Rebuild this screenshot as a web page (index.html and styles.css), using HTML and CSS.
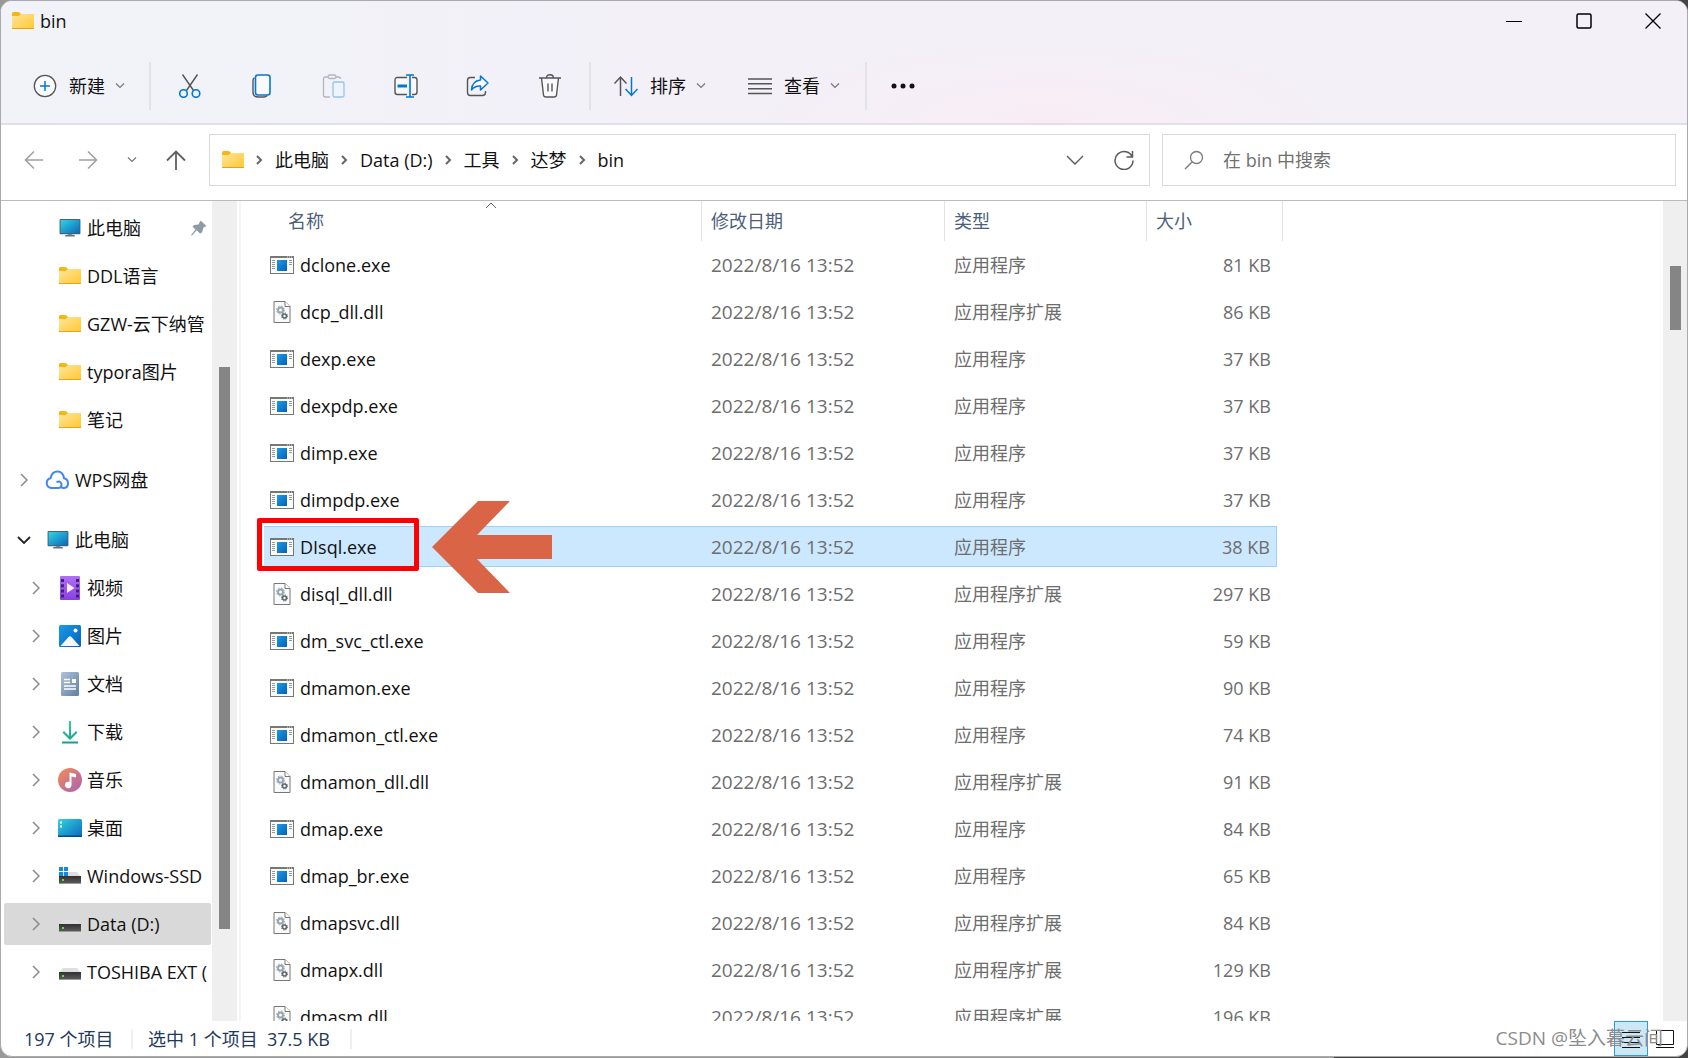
FILE: index.html
```html
<!DOCTYPE html>
<html lang="zh-CN">
<head>
<meta charset="utf-8">
<title>bin</title>
<link rel="stylesheet" href="styles.css">
</head>
<body>
<svg class="defs" aria-hidden="true">
  <defs>
    <linearGradient id="gFolder" x1="0" y1="0" x2="1" y2="1"><stop offset="0" stop-color="#ffe69c"/><stop offset="1" stop-color="#ffc830"/></linearGradient>
    <linearGradient id="gScreen" x1="0" y1="0" x2="1" y2="1"><stop offset="0" stop-color="#34d3e2"/><stop offset="1" stop-color="#0a68bc"/></linearGradient>
    <linearGradient id="gBlue" x1="0" y1="0" x2="1" y2="1"><stop offset="0" stop-color="#1a9be8"/><stop offset="1" stop-color="#0561b8"/></linearGradient>
    <linearGradient id="gVideo" x1="0" y1="0" x2="0" y2="1"><stop offset="0" stop-color="#b070f5"/><stop offset="1" stop-color="#8a3fe0"/></linearGradient>
    <linearGradient id="gDoc" x1="0" y1="0" x2="1" y2="1"><stop offset="0" stop-color="#b0c4d8"/><stop offset="1" stop-color="#5f7fa5"/></linearGradient>
    <linearGradient id="gDown" x1="0" y1="0" x2="0" y2="1"><stop offset="0" stop-color="#35cf92"/><stop offset="1" stop-color="#109f94"/></linearGradient>
    <linearGradient id="gMusic" x1="0" y1="0" x2="1" y2="1"><stop offset="0" stop-color="#f58f50"/><stop offset="1" stop-color="#a85fb8"/></linearGradient>
    <linearGradient id="gDrive" x1="0" y1="0" x2="0" y2="1"><stop offset="0" stop-color="#303030"/><stop offset="1" stop-color="#5a5a5a"/></linearGradient>
  </defs>
  <symbol id="folder" viewBox="0 0 22 18"><path d="M0 1.5Q0 0 1.5 0H6q1 0 1.600 .6L9 2H22V4H0z" fill="#f9b516"/><path d="M0 5Q0 4 1 4H6.500L9 2H21.500Q22 2 22 2.500V17H0z" fill="url(#gFolder)"/><path d="M0 16h22v1H0z" fill="#e5a020"/></symbol>
  <symbol id="pc" viewBox="0 0 22 19"><path d="M9 15h4l1 3H8z" fill="#8d969c"/><path d="M6 17h10v1.500H6z" fill="#66727a"/><rect width="22" height="16" rx="1" fill="#44606e"/><rect x="1" y="1" width="20" height="14" fill="url(#gScreen)"/></symbol>
  <symbol id="chev" viewBox="0 0 8 14"><path d="M1 1l6 6-6 6" fill="none" stroke="currentColor" stroke-width="1.500"/></symbol>
  <symbol id="crumb" viewBox="0 0 7 10"><path d="M1 1l4 4-4 4" fill="none" stroke="#666" stroke-width="2"/></symbol>
  <symbol id="down" viewBox="0 0 10 6"><path d="M1 .5l4 4 4-4" fill="none" stroke="currentColor" stroke-width="1.200"/></symbol>
  <symbol id="drive" viewBox="0 0 22 18"><path d="M4 5h14l4 5H0z" fill="#dcdee1"/><rect y="9" width="22" height="7" fill="url(#gDrive)"/><path d="M0 16h22v1H0z" fill="#9a9a9a"/><rect x="3" y="12" width="2" height="2" fill="#4bea2c"/></symbol>
  <symbol id="exe" viewBox="0 0 24 18"><rect x=".5" y=".5" width="23" height="17" fill="#fbfbfb" stroke="#777871"/><path d="M0 0h24v2H0z" fill="#777871"/><path d="M17 1h1m1 0h1m1 0h1" stroke="#ddd"/><path d="M2 4.500h3m-3 2h3m-3 2h3m-3 2h3m-3 2h3M19 4.500h3m-3 2h3m-3 2h3" stroke="#999"/><rect x="7" y="4" width="10" height="11" fill="url(#gBlue)"/></symbol>
  <symbol id="dll" viewBox="0 0 17 22"><path d="M.5.5h11l5 5v16H.5z" fill="#fafafa" stroke="#777"/><path d="M11.500.5v5h5" fill="#fff" stroke="#777"/><circle cx="7" cy="9" r="2.500" fill="none" stroke="#98a6b0" stroke-width="2"/><circle cx="7" cy="9" r="4" fill="none" stroke="#98a6b0" stroke-dasharray="1.600 1.540"/><circle cx="11" cy="15" r="2" fill="none" stroke="#5c6870" stroke-width="1.600"/><circle cx="11" cy="15" r="3" fill="none" stroke="#5c6870" stroke-dasharray="1.200 1.156"/></symbol>
</svg>

<div class="window">
  <header class="chrome">
    <div class="titlebar">
      <svg class="i-folder"><use href="#folder"/></svg>
      <span class="title">bin</span>
      <div class="caption">
        <button aria-label="最小化"><svg width="16" height="16"><path d="M0 8.500h16" stroke="#000"/></svg></button>
        <button aria-label="最大化"><svg width="16" height="16"><rect x="1" y="1" width="14" height="14" rx="1.500" fill="none" stroke="#000" stroke-width="1.500"/></svg></button>
        <button aria-label="关闭"><svg width="16" height="16"><path d="M.5.5l15 15m0-15l-15 15" stroke="#000" stroke-width="1.300"/></svg></button>
      </div>
    </div>
    <div class="toolbar">
      <button class="tool new"><svg width="24" height="24"><circle cx="12" cy="12" r="10.700" fill="#fafafc" stroke="#555" stroke-width="1.300"/><path d="M7 12h10M12 7v10" stroke="#0078d4" stroke-width="1.500"/></svg>新建<svg class="i-down"><use href="#down"/></svg></button>
      <span class="sep"></span>
      <div class="icons">
        <button aria-label="剪切"><svg width="24" height="24" fill="none" stroke-width="1.400"><path d="M4.500.5l11 16M19.500.5l-11 16" stroke="#555"/><circle cx="5.500" cy="19.500" r="3.800" stroke="#0078d4" stroke-width="1.600"/><circle cx="18" cy="19.500" r="3.800" stroke="#0078d4" stroke-width="1.600"/></svg></button>
        <button aria-label="复制"><svg width="24" height="24" fill="none" stroke-width="1.400"><path d="M4.500 4Q3 4.500 3 7v11q0 5 5 5h6q2 0 3-1.500" stroke="#555"/><rect x="5.500" y="1" width="14.500" height="20" rx="2.500" fill="#fbfbfd" stroke="#0078d4" stroke-width="1.600"/></svg></button>
        <button aria-label="粘贴"><svg width="24" height="24" fill="none" stroke-width="1.300"><path d="M6 3H3.500Q1.500 3 1.500 5v16q0 2 2 2H8M14 3h2.500q2 0 2 2" stroke="#b5b6bb"/><rect x="6" y="1" width="8" height="3.500" rx="1.700" stroke="#b5b6bb"/><rect x="11" y="8" width="11" height="15" rx="1.500" fill="#eef4fb" stroke="#93c3ea"/></svg></button>
        <button aria-label="重命名"><svg width="24" height="24" fill="none" stroke-width="1.400"><path d="M13 3.500H3.500Q1 3.500 1 6v12q0 2.500 2.500 2.500H13M18 3.500h2.500Q23 3.500 23 6v12q0 2.500-2.500 2.500H18" fill="#fafafc" stroke="#555"/><path d="M3.500 12H13" stroke="#0078d4" stroke-width="3"/><path d="M16 1v22M12 1h8M12 23h8" stroke="#0078d4" stroke-width="1.600"/></svg></button>
        <button aria-label="共享"><svg width="24" height="24" fill="none" stroke-width="1.400"><path d="M9 3.500H4.500Q1.500 3.500 1.500 6.500v12q0 3 3 3h12q3 0 3-3V17" stroke="#555"/><path d="M14.500 2L22 9l-7.500 7v-4Q9 11.500 5.500 16 6 7 14.500 6z" fill="#fafafc" stroke="#0078d4" stroke-width="1.500" stroke-linejoin="round"/></svg></button>
        <button aria-label="删除"><svg width="24" height="24" fill="none" stroke="#555" stroke-width="1.400"><path d="M3.500 4L5.500 21q.3 2 2.500 2h8q2.200 0 2.500-2l2-17" fill="#fafafc"/><path d="M1 4h22M8.500 4q0-3.300 3.500-3.300T15.500 4M10 9.500v8M14 9.500v8"/></svg></button>
      </div>
      <span class="sep"></span>
      <button class="tool"><svg width="24" height="24" fill="none" stroke-width="1.500"><path d="M6.500 22V3M.5 9.500l6-6.500 6 6.500" stroke="#555"/><path d="M17.500 3v18M11.500 15l6 6.500 6-6.500" stroke="#0078d4"/></svg>排序<svg class="i-down"><use href="#down"/></svg></button>
      <button class="tool view"><svg width="24" height="24"><path d="M0 5h24M0 9.800h24M0 14.700h24M0 19.500h24" stroke="#555" stroke-width="1.400"/></svg>查看<svg class="i-down"><use href="#down"/></svg></button>
      <span class="sep"></span>
      <button class="more" aria-label="查看更多"><svg width="24" height="6" fill="#111"><circle cx="3" cy="3" r="2.500"/><circle cx="12" cy="3" r="2.500"/><circle cx="21" cy="3" r="2.500"/></svg></button>
    </div>
  </header>

  <div class="navbar">
    <div class="history">
      <button aria-label="后退"><svg width="20" height="20" fill="none" stroke="#a0a0a0" stroke-width="1.600"><path d="M19 10H2M10 1.500L1.500 10l8.500 8.500"/></svg></button>
      <button aria-label="前进"><svg width="20" height="20" fill="none" stroke="#a0a0a0" stroke-width="1.600"><path d="M1 10h17M10 1.500l8.500 8.500-8.500 8.500"/></svg></button>
      <button aria-label="最近浏览的位置" class="recent"><svg class="i-down"><use href="#down"/></svg></button>
      <button aria-label="向上"><svg width="20" height="20" fill="none" stroke="#5f5f5f" stroke-width="1.800"><path d="M10 20V2M1 10.500l9-9 9 9"/></svg></button>
    </div>
    <div class="address">
      <svg class="i-folder"><use href="#folder"/></svg>
      <svg class="i-crumb"><use href="#crumb"/></svg><a href="#">此电脑</a>
      <svg class="i-crumb"><use href="#crumb"/></svg><a href="#">Data (D:)</a>
      <svg class="i-crumb"><use href="#crumb"/></svg><a href="#">工具</a>
      <svg class="i-crumb"><use href="#crumb"/></svg><a href="#">达梦</a>
      <svg class="i-crumb"><use href="#crumb"/></svg><a href="#">bin</a>
      <div class="address-end">
        <button aria-label="以前的位置"><svg width="18" height="10"><path d="M1 1l8 8 8-8" fill="none" stroke="#5a5a5a" stroke-width="1.400"/></svg></button>
        <button aria-label="刷新"><svg width="20" height="20" fill="none" stroke="#5a5a5a" stroke-width="1.500"><path d="M18.500 7.500A9 9 0 1 0 19 10.500M18.500 1v6h-6"/></svg></button>
      </div>
    </div>
    <label class="search">
      <svg width="20" height="20" fill="none" stroke="#7a7a7a" stroke-width="1.300"><circle cx="12.500" cy="7.500" r="6"/><path d="M8.200 11.800L1 19"/></svg>
      <input type="search" placeholder="在 bin 中搜索" aria-label="搜索">
    </label>
  </div>

  <main class="body">
    <nav class="tree" aria-label="导航窗格">
      <ul>
        <li><a href="#" class="node sub"><svg class="i-node"><use href="#pc"/></svg>此电脑<svg class="pin" width="16" height="16"><path d="M9.500 0.500L15.500 6l-2 1-1 .5-1.500 5-2 1-3.300-3.200L1 15.500 0 15l4.500-5.500L1.500 6.500l1.500-1.500 4.500-.5z" fill="#8f9aa3"/></svg></a></li>
        <li><a href="#" class="node sub"><svg class="i-node"><use href="#folder"/></svg>DDL语言</a></li>
        <li><a href="#" class="node sub"><svg class="i-node"><use href="#folder"/></svg>GZW-云下纳管</a></li>
        <li><a href="#" class="node sub"><svg class="i-node"><use href="#folder"/></svg>typora图片</a></li>
        <li><a href="#" class="node sub"><svg class="i-node"><use href="#folder"/></svg>笔记</a></li>
      </ul>
      <ul>
        <li><a href="#" class="node"><svg class="i-chev"><use href="#chev"/></svg><svg class="i-node cloud" viewBox="0 0 24 20" fill="none" stroke="#3f86f5" stroke-width="2"><path d="M14 18H6A5 5 0 0 1 5.500 8.200Q7 1.500 12.500 1.500T19 8.200q4 1 4 5 0 4.800-4.500 4.800-2.500 0-2.500-2.500M11.500 12.200q4-2 5 2 .5 3.800-3.500 3.800"/></svg>WPS网盘</a></li>
      </ul>
      <ul>
        <li><a href="#" class="node"><svg class="i-open" width="14" height="8"><path d="M1 1l6 6 6-6" fill="none" stroke="#222" stroke-width="1.800"/></svg><svg class="i-node"><use href="#pc"/></svg>此电脑</a></li>
        <li><a href="#" class="node sub"><svg class="i-chev"><use href="#chev"/></svg><svg class="i-node tall" viewBox="0 0 22 24"><rect x="1" width="20" height="24" rx="1" fill="url(#gVideo)"/><path d="M3.500 3v20M18.500 3v20" stroke="#432078" stroke-width="3" stroke-dasharray="3 2.200"/><path d="M8 7l7.500 5L8 17z" fill="#f5eefe"/></svg>视频</a></li>
        <li><a href="#" class="node sub"><svg class="i-chev"><use href="#chev"/></svg><svg class="i-node tall" viewBox="0 0 22 22"><rect width="22" height="22" rx="1.500" fill="url(#gBlue)"/><path d="M1.500 21l8-9q1.500-1.500 3 0l8 9z" fill="#f2f8fd"/><circle cx="16.500" cy="5.500" r="2" fill="#fff"/></svg>图片</a></li>
        <li><a href="#" class="node sub"><svg class="i-chev"><use href="#chev"/></svg><svg class="i-node tall" viewBox="0 0 22 24"><rect x="2" width="18" height="24" rx="1.500" fill="url(#gDoc)"/><path d="M5 7.500h6M5 10.500h6M5 14h12M5 17h12" stroke="#fff" stroke-width="1.300"/><path d="M13 7h4v4h-4z" fill="#fff"/></svg>文档</a></li>
        <li><a href="#" class="node sub"><svg class="i-chev"><use href="#chev"/></svg><svg class="i-node tall" viewBox="0 0 22 24"><path d="M10 1h2v15l5-5 1.500 1.500L11 20l-7.500-7.500L5 11l5 5zM3 21.500h16v2H3z" fill="url(#gDown)"/></svg>下载</a></li>
        <li><a href="#" class="node sub"><svg class="i-chev"><use href="#chev"/></svg><svg class="i-node tall wide" viewBox="0 0 24 24"><circle cx="12" cy="12" r="12" fill="url(#gMusic)"/><path d="M11.500 4.500l6.500 1.500v3.500l-4.500-1V17a3.300 3.300 0 1 1-2-3z" fill="#fff"/></svg>音乐</a></li>
        <li><a href="#" class="node sub"><svg class="i-chev"><use href="#chev"/></svg><svg class="i-node wide" viewBox="0 0 24 18"><rect width="24" height="18" rx="1.500" fill="url(#gScreen)"/><path d="M2 2.500h2v2H2zM2 6.500h2v2H2z" fill="#fff"/><path d="M0 16.500h24v1.500H0z" fill="#064a80"/></svg>桌面</a></li>
        <li><a href="#" class="node sub"><svg class="i-chev"><use href="#chev"/></svg><svg class="i-node" viewBox="0 0 22 18"><use href="#drive" width="22" height="18"/><path d="M0 0h4v4H0zM5 0h4v4H5zM0 5h4v4H0zM5 5h4v4H5z" fill="#128ae0"/></svg>Windows-SSD</a></li>
        <li><a href="#" class="node sub current"><svg class="i-chev"><use href="#chev"/></svg><svg class="i-node"><use href="#drive"/></svg>Data (D:)</a></li>
        <li><a href="#" class="node sub"><svg class="i-chev"><use href="#chev"/></svg><svg class="i-node"><use href="#drive"/></svg>TOSHIBA EXT (</a></li>
      </ul>
    </nav>
    <div class="track tree-track"><span class="thumb"></span></div>

    <div class="files">
      <table>
        <colgroup><col class="c-name"><col class="c-date"><col class="c-type"><col class="c-size"></colgroup>
        <thead><tr><th><svg class="sort" width="12" height="7"><path d="M1 6l5-5 5 5" fill="none" stroke="#666"/></svg>名称</th><th>修改日期</th><th>类型</th><th>大小</th></tr></thead>
        <tbody>
          <tr><td><div><svg class="i-file"><use href="#exe"/></svg>dclone.exe</div></td><td><div>2022/8/16 13:52</div></td><td><div>应用程序</div></td><td><div>81 KB</div></td></tr>
          <tr><td><div><svg class="i-file"><use href="#dll"/></svg>dcp_dll.dll</div></td><td><div>2022/8/16 13:52</div></td><td><div>应用程序扩展</div></td><td><div>86 KB</div></td></tr>
          <tr><td><div><svg class="i-file"><use href="#exe"/></svg>dexp.exe</div></td><td><div>2022/8/16 13:52</div></td><td><div>应用程序</div></td><td><div>37 KB</div></td></tr>
          <tr><td><div><svg class="i-file"><use href="#exe"/></svg>dexpdp.exe</div></td><td><div>2022/8/16 13:52</div></td><td><div>应用程序</div></td><td><div>37 KB</div></td></tr>
          <tr><td><div><svg class="i-file"><use href="#exe"/></svg>dimp.exe</div></td><td><div>2022/8/16 13:52</div></td><td><div>应用程序</div></td><td><div>37 KB</div></td></tr>
          <tr><td><div><svg class="i-file"><use href="#exe"/></svg>dimpdp.exe</div></td><td><div>2022/8/16 13:52</div></td><td><div>应用程序</div></td><td><div>37 KB</div></td></tr>
          <tr class="selected"><td><div><svg class="i-file"><use href="#exe"/></svg>DIsql.exe<span class="callout"></span><svg class="arrow" width="120" height="92"><path d="M0 46L46 0h32L45 34h75v24H45l33 34H46z" fill="#d96546"/></svg></div></td><td><div>2022/8/16 13:52</div></td><td><div>应用程序</div></td><td><div>38 KB</div></td></tr>
          <tr><td><div><svg class="i-file"><use href="#dll"/></svg>disql_dll.dll</div></td><td><div>2022/8/16 13:52</div></td><td><div>应用程序扩展</div></td><td><div>297 KB</div></td></tr>
          <tr><td><div><svg class="i-file"><use href="#exe"/></svg>dm_svc_ctl.exe</div></td><td><div>2022/8/16 13:52</div></td><td><div>应用程序</div></td><td><div>59 KB</div></td></tr>
          <tr><td><div><svg class="i-file"><use href="#exe"/></svg>dmamon.exe</div></td><td><div>2022/8/16 13:52</div></td><td><div>应用程序</div></td><td><div>90 KB</div></td></tr>
          <tr><td><div><svg class="i-file"><use href="#exe"/></svg>dmamon_ctl.exe</div></td><td><div>2022/8/16 13:52</div></td><td><div>应用程序</div></td><td><div>74 KB</div></td></tr>
          <tr><td><div><svg class="i-file"><use href="#dll"/></svg>dmamon_dll.dll</div></td><td><div>2022/8/16 13:52</div></td><td><div>应用程序扩展</div></td><td><div>91 KB</div></td></tr>
          <tr><td><div><svg class="i-file"><use href="#exe"/></svg>dmap.exe</div></td><td><div>2022/8/16 13:52</div></td><td><div>应用程序</div></td><td><div>84 KB</div></td></tr>
          <tr><td><div><svg class="i-file"><use href="#exe"/></svg>dmap_br.exe</div></td><td><div>2022/8/16 13:52</div></td><td><div>应用程序</div></td><td><div>65 KB</div></td></tr>
          <tr><td><div><svg class="i-file"><use href="#dll"/></svg>dmapsvc.dll</div></td><td><div>2022/8/16 13:52</div></td><td><div>应用程序扩展</div></td><td><div>84 KB</div></td></tr>
          <tr><td><div><svg class="i-file"><use href="#dll"/></svg>dmapx.dll</div></td><td><div>2022/8/16 13:52</div></td><td><div>应用程序扩展</div></td><td><div>129 KB</div></td></tr>
          <tr><td><div><svg class="i-file"><use href="#dll"/></svg>dmasm.dll</div></td><td><div>2022/8/16 13:52</div></td><td><div>应用程序扩展</div></td><td><div>196 KB</div></td></tr>
        </tbody>
      </table>
    </div>
    <div class="track files-track"><span class="thumb"></span></div>
  </main>

  <footer class="status">
    <span class="count">197 个项目</span>
    <span class="picked">选中 1 个项目&nbsp; 37.5 KB</span>
    <div class="views">
      <button class="on" aria-label="详细信息"><svg width="18" height="18"><path d="M0 2.500h18M0 7.500h18M0 12.500h18M0 17.500h18" stroke="#111" stroke-width="1.200"/></svg></button>
      <button aria-label="大图标"><svg width="18" height="18" fill="none" stroke="#111"><path d="M.5.5h17v14H.5zM0 17.500h18"/></svg></button>
      <span class="watermark">CSDN @坠入暮云间</span>
    </div>
  </footer>
</div>
</body>
</html>
```
FILE: styles.css
```css
* { box-sizing: border-box; }

body {
  margin: 0;
  background: linear-gradient(90deg, #999 79%, #444 79%);
  font: 18px/24px "Open Sans", "Noto Sans CJK SC", sans-serif;
  color: #111;
}

.defs { position: absolute; width: 0; height: 0; }
svg { display: block; flex: none; }
a { color: inherit; text-decoration: none; }
ul { list-style: none; margin: 0; padding: 0; }
button {
  display: flex;
  align-items: center;
  justify-content: center;
  margin: 0;
  padding: 0;
  border: 0;
  background: none;
  font: inherit;
  color: inherit;
}

.window {
  display: flex;
  flex-direction: column;
  height: calc(100vh - 1px);
  border: 1px solid #aaa;
  border-radius: 12px;
  overflow: hidden;
  background: #fff;
}

.chrome {
  background: radial-gradient(ellipse 320px 90px at 62% 100%, #f9edf5, transparent), linear-gradient(90deg, #f1f3f9, #f3f0f8 40%);
  border-bottom: 2px solid #e1dfe7;
}

.titlebar { display: flex; align-items: center; height: 40px; padding-left: 11px; }
.title { margin-left: 6px; }
.caption { display: flex; margin-left: auto; }
.caption button { width: 70px; height: 40px; }
.caption button:last-child { width: 68px; }
.i-folder { width: 22px; height: 18px; }
.i-down { width: 10px; height: 6px; color: #777; }

.toolbar { display: flex; align-items: center; height: 82px; padding-top: 7px; }
.tool { gap: 12px; height: 48px; padding: 0 19px 0 23px; }
.tool .i-down { margin-left: -2px; }
.new { padding-left: 32px; padding-right: 24px; }
.view { margin-right: 6px; }
.sep { width: 2px; height: 48px; background: #e2e2e8; }
.icons { display: flex; width: 438px; padding: 0 3px; }
.icons button { width: 72px; height: 48px; }
.more { width: 72px; height: 48px; }

.navbar {
  display: flex;
  align-items: center;
  height: 76px;
  padding: 0 11px 5px 0;
  border-bottom: 1px solid #bbb;
}
.history { display: flex; align-items: center; width: 208px; padding-left: 23px; gap: 34px; }
.recent { width: 10px; margin: 0 -5px; }
.address, .search {
  display: flex;
  align-items: center;
  height: 52px;
  border: 1px solid #d9d9d9;
}
.address { flex: 912; padding: 0 15px 0 12px; gap: 12px; }
.i-crumb { width: 7px; height: 10px; }
.address-end { display: flex; gap: 30px; margin-left: auto; }
.search { flex: 491; margin-left: 12px; padding-left: 21px; gap: 19px; }
.search input {
  flex: 1;
  min-width: 0;
  padding: 0;
  border: 0;
  outline: 0;
  background: none;
  font: inherit;
}
.search input::placeholder { color: #707070; opacity: 1; }

.body { display: flex; flex: 1; min-height: 0; }
.tree { width: 211px; padding-top: 3px; overflow: hidden; }
.tree ul + ul { margin-top: 12px; }
.tree li { height: 48px; padding: 3px 1px 3px 3px; }
.node {
  display: flex;
  align-items: center;
  height: 42px;
  padding-left: 43px;
  border-radius: 2px;
  white-space: nowrap;
  overflow: hidden;
}
.sub { padding-left: 55px; }
.current { background: #d9d9d9; }
.i-node { width: 22px; height: 18px; margin-right: 6px; }
.i-node.tall { height: 24px; }
.i-node.wide { width: 24px; margin-left: -1px; margin-right: 5px; }
.i-node.cloud { width: 24px; height: 20px; margin-left: -2px; }
.i-chev { width: 8px; height: 14px; margin-left: -27px; margin-right: 19px; color: #8a8a8a; }
.i-open { margin-left: -30px; margin-right: 16px; }
.pin { margin-left: auto; margin-right: 4px; }

.track { display: grid; background: #efefef; }
.track .thumb { grid-row: 2; background: #858585; }
.tree-track { width: 25px; padding: 0 7px; grid-template-rows: 166fr 562fr 92fr; }
.files-track { width: 24px; padding: 0 6px 0 7px; grid-template-rows: 65fr 64fr 691fr; }

.files {
  flex: 1;
  min-width: 0;
  margin-left: 2px;
  padding-left: 23px;
  border-left: 2px solid #f5f5f5;
  overflow: hidden;
}
table { width: 1019px; table-layout: fixed; border-collapse: separate; border-spacing: 0; }
.c-name { width: 438px; }
.c-date { width: 243px; }
.c-type { width: 202px; }
.c-size { width: 136px; }
th {
  position: relative;
  height: 40px;
  padding: 0 9px;
  border-right: 1px solid #e3e3e3;
  font-weight: 400;
  text-align: left;
  color: #4c607a;
}
th:first-child { padding-left: 24px; }
.sort { position: absolute; top: 1px; left: calc(50% + 2px); }
td { height: 47px; padding: 0; color: #6d6d6d; }
td div {
  display: flex;
  align-items: center;
  height: 41px;
  padding-left: 9px;
  border: 1px solid transparent;
  border-width: 1px 0;
}
td:first-child div { position: relative; padding-left: 6px; color: #111; }
td:nth-child(2) { font-size: 19px; }
td:last-child div { justify-content: flex-end; margin-right: 6px; padding-right: 6px; }
.i-file { width: 24px; height: 22px; margin-right: 6px; }
.selected div { background: #cce8ff; border-color: #99d1ff; }
.selected td:last-child div { border-right-width: 1px; }

/* annotation over the selected file */
.callout {
  position: absolute;
  top: -9px;
  left: -7px;
  width: 162px;
  height: 53px;
  border: 5px solid #f00;
  border-radius: 2px;
}
.arrow { position: absolute; top: -26px; left: 168px; }

.status { display: flex; align-items: center; height: 35px; padding-left: 23px; color: #1e395b; }
.status > span { line-height: 20px; border-right: 2px solid #f0f0f0; }
.count { width: 109px; }
.picked { width: 204px; margin-left: 15px; }
.views { display: flex; position: relative; margin-left: auto; padding-right: 5px; }
.views button { width: 34px; height: 35px; }
.views .on { border: 1px solid #2a9ddb; background: #cce8f7; }
.watermark {
  position: absolute;
  right: 24px;
  top: 5px;
  white-space: nowrap;
  font-size: 19px;
  color: #8c8c8c;
}
```
